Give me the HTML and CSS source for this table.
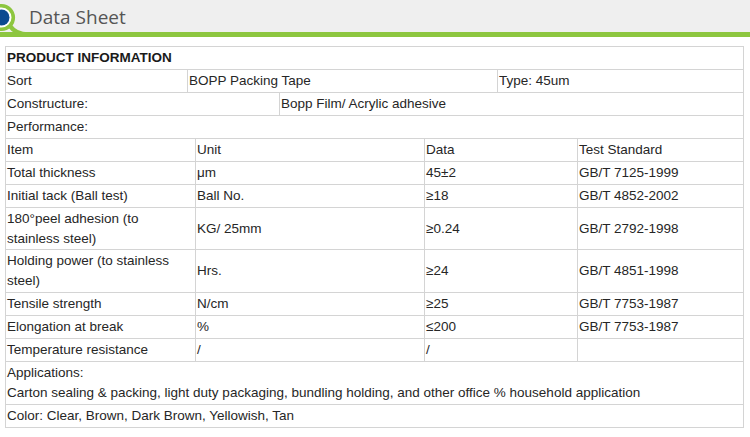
FILE: index.html
```html
<!DOCTYPE html>
<html lang="en">
<head>
<meta charset="utf-8">
<title>Data Sheet</title>
<link rel="stylesheet" href="styles.css">
</head>
<body>
<header class="head">
  <svg class="head-mark" width="40" height="38" viewBox="0 0 40 38" aria-hidden="true">
    <path d="M10 26 Q16 34.5 28 34.5 L40 34.5" fill="none" stroke="#8dc63f" stroke-width="4.5"/>
    <circle cx="1.5" cy="17.5" r="11.8" fill="#fff" stroke="#8dc63f" stroke-width="3.6"/>
    <circle cx="1.5" cy="17.5" r="8" fill="#0b4a90"/>
  </svg>
  <h1 class="head-title">Data Sheet</h1>
</header>

<div class="sheet">
  <div class="row r-full"><div class="cell strong">PRODUCT INFORMATION</div></div>
  <div class="row r-sort">
    <div class="cell">Sort</div>
    <div class="cell">BOPP Packing Tape</div>
    <div class="cell">Type: 45um</div>
  </div>
  <div class="row r-cons">
    <div class="cell">Constructure:</div>
    <div class="cell">Bopp Film/ Acrylic adhesive</div>
  </div>
  <div class="row r-full"><div class="cell">Performance:</div></div>
  <div class="row r-perf">
    <div class="cell">Item</div><div class="cell">Unit</div><div class="cell">Data</div><div class="cell">Test Standard</div>
  </div>
  <div class="row r-perf">
    <div class="cell">Total thickness</div><div class="cell">μm</div><div class="cell">45±2</div><div class="cell">GB/T 7125-1999</div>
  </div>
  <div class="row r-perf">
    <div class="cell">Initial tack (Ball test)</div><div class="cell">Ball No.</div><div class="cell">≥18</div><div class="cell">GB/T 4852-2002</div>
  </div>
  <div class="row r-perf">
    <div class="cell snug">180°peel adhesion (to stainless steel)</div><div class="cell">KG/ 25mm</div><div class="cell">≥0.24</div><div class="cell">GB/T 2792-1998</div>
  </div>
  <div class="row r-perf">
    <div class="cell">Holding power (to stainless steel)</div><div class="cell">Hrs.</div><div class="cell">≥24</div><div class="cell">GB/T 4851-1998</div>
  </div>
  <div class="row r-perf">
    <div class="cell">Tensile strength</div><div class="cell">N/cm</div><div class="cell">≥25</div><div class="cell">GB/T 7753-1987</div>
  </div>
  <div class="row r-perf">
    <div class="cell">Elongation at break</div><div class="cell">%</div><div class="cell">≤200</div><div class="cell">GB/T 7753-1987</div>
  </div>
  <div class="row r-perf">
    <div class="cell">Temperature resistance</div><div class="cell">/</div><div class="cell">/</div><div class="cell"></div>
  </div>
  <div class="row r-full">
    <div class="cell">Applications:<br>Carton sealing &amp; packing, light duty packaging, bundling holding, and other office % household application</div>
  </div>
  <div class="row r-full"><div class="cell">Color: Clear, Brown, Dark Brown, Yellowish, Tan</div></div>
</div>
</body>
</html>
```

FILE: styles.css
```css
html, body {
  margin: 0;
  padding: 0;
  background: #ffffff;
}

.head {
  position: relative;
  height: 32px;
  background: #efefef;
  border-bottom: 5px solid #8dc63f;
  display: flex;
  align-items: center;
  padding-left: 29px;
}

.head-mark {
  position: absolute;
  left: 0;
  top: 0;
}

.head-title {
  margin: 0;
  font-family: "Open Sans", "Noto Sans", sans-serif;
  font-weight: 400;
  font-size: 19px;
  line-height: 24px;
  color: #555555;
  padding-top: 1px;
}

.sheet {
  margin: 9px 0 0 5px;
  width: 739px;
  box-sizing: border-box;
  border-left: 1px solid #d4d4d4;
  border-top: 1px solid #d4d4d4;
  font-family: "Liberation Sans", Arial, sans-serif;
  font-size: 13.5px;
  line-height: 20px;
  color: #262626;
}

.row {
  display: grid;
}

.r-full { grid-template-columns: 738px; }
.r-sort { grid-template-columns: 182px 310px 246px; }
.r-cons { grid-template-columns: 274px 464px; }
.r-perf { grid-template-columns: 190px 229px 153px 166px; }

.cell {
  box-sizing: border-box;
  border-right: 1px solid #d4d4d4;
  border-bottom: 1px solid #d4d4d4;
  padding: 1px;
  min-height: 22.6px;
  display: flex;
  align-items: center;
}

.r-full .cell {
  display: block;
}

.snug {
  padding-top: 0.5px;
  padding-bottom: 0.5px;
}

.strong {
  font-weight: 700;
  color: #1a1a1a;
}
```
